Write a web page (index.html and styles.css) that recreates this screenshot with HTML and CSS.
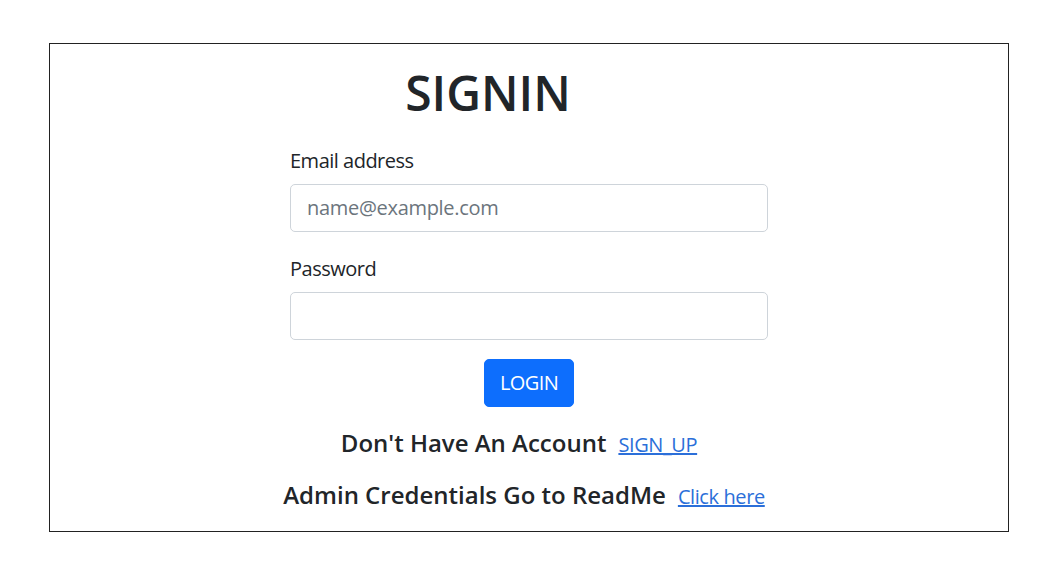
FILE: index.html
```html
<!DOCTYPE html>
<html lang="en">
<head>
<meta charset="utf-8">
<title>Signin</title>
<link rel="stylesheet" href="styles.css">
</head>
<body>
<main class="card">
  <h1 class="title">SIGNIN</h1>
  <form class="form">
    <label class="label" for="email">Email address</label>
    <input class="input" id="email" type="email" placeholder="name@example.com">
    <label class="label label-pw" for="pw">Password</label>
    <input class="input" id="pw" type="password">
    <div class="actions"><button class="btn" type="button">LOGIN</button></div>
  </form>
  <p class="line line-one"><span class="lead">Don't Have An Account</span><a class="link" href="#">SIGN_UP</a></p>
  <p class="line line-two"><span class="lead">Admin Credentials Go to ReadMe</span><a class="link" href="#">Click here</a></p>
</main>
</body>
</html>
```
FILE: styles.css
```css
* { box-sizing: border-box; }
html, body { margin: 0; background: #fff; }
body {
  padding: 43px 49px;
  font-family: "Open Sans", "Noto Sans", sans-serif;
  color: #212529;
}
.card {
  width: 960px;
  height: 489px;
  border: 1px solid #222;
  padding: 20px 0 0;
  display: flex;
  flex-direction: column;
  align-items: center;
}
.title {
  margin: 0;
  width: 100%;
  padding-right: 82px;
  text-align: center;
  font-size: 48px;
  font-weight: 600;
  line-height: 57.6px;
}
.form {
  width: 478px;
  margin-top: 24px;
  display: flex;
  flex-direction: column;
}
.label {
  font-size: 20px;
  line-height: 30px;
  margin-bottom: 8px;
  letter-spacing: -0.5px;
}
.label-pw { margin-top: 22px; }
.input {
  height: 48px;
  width: 100%;
  border: 1px solid #ced4da;
  border-radius: 5px;
  padding: 0 16px;
  font-family: inherit;
  font-size: 20px;
  letter-spacing: -0.3px;
  color: #212529;
  background: #fff;
}
.input::placeholder { color: #6c757d; }
.actions {
  display: flex;
  justify-content: center;
  margin-top: 19px;
}
.btn {
  height: 48px;
  padding: 0 15px;
  border: 1px solid #0d6efd;
  border-radius: 5px;
  background: #0d6efd;
  color: #fff;
  font-family: inherit;
  font-size: 20px;
  letter-spacing: -0.6px;
}
.line {
  margin: 22px 0 0;
  display: flex;
  align-items: baseline;
  gap: 12px;
}
.line-one { padding-right: 20px; }
.line-two { margin-top: 24px; padding-right: 10px; }
.lead {
  font-size: 24px;
  font-weight: 600;
  line-height: 28.8px;
  letter-spacing: 0;
}
.link {
  font-size: 20px;
  line-height: 24px;
  color: #2b6fd9;
  text-decoration: underline;
  letter-spacing: -0.4px;
}
```
